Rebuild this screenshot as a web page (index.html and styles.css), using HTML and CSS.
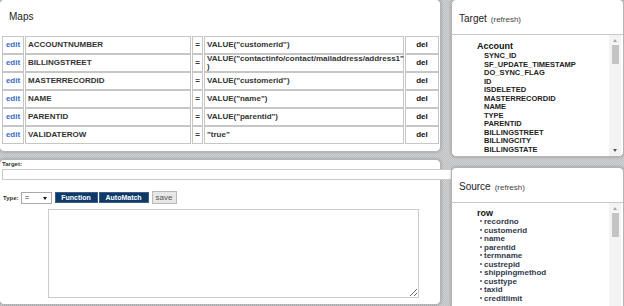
FILE: index.html
```html
<!DOCTYPE html>
<html>
<head>
<meta charset="utf-8">
<title>Maps</title>
<link rel="stylesheet" href="styles.css">
</head>
<body>
<div class="layout">
  <div class="col-left">
    <section class="panel maps">
      <h2 class="panel-title">Maps</h2>
      <table class="map-table">
        <tr>
          <td class="c-edit"><a class="edit">edit</a></td>
          <td class="c-field">ACCOUNTNUMBER</td>
          <td class="c-eq">=</td>
          <td class="c-val">VALUE("customerid")</td>
          <td class="c-del">del</td>
        </tr>
        <tr>
          <td class="c-edit"><a class="edit">edit</a></td>
          <td class="c-field">BILLINGSTREET</td>
          <td class="c-eq">=</td>
          <td class="c-val">VALUE("contactinfo/contact/mailaddress/address1"<br>)</td>
          <td class="c-del">del</td>
        </tr>
        <tr>
          <td class="c-edit"><a class="edit">edit</a></td>
          <td class="c-field">MASTERRECORDID</td>
          <td class="c-eq">=</td>
          <td class="c-val">VALUE("customerid")</td>
          <td class="c-del">del</td>
        </tr>
        <tr>
          <td class="c-edit"><a class="edit">edit</a></td>
          <td class="c-field">NAME</td>
          <td class="c-eq">=</td>
          <td class="c-val">VALUE("name")</td>
          <td class="c-del">del</td>
        </tr>
        <tr>
          <td class="c-edit"><a class="edit">edit</a></td>
          <td class="c-field">PARENTID</td>
          <td class="c-eq">=</td>
          <td class="c-val">VALUE("parentid")</td>
          <td class="c-del">del</td>
        </tr>
        <tr>
          <td class="c-edit"><a class="edit">edit</a></td>
          <td class="c-field">VALIDATEROW</td>
          <td class="c-eq">=</td>
          <td class="c-val">"true"</td>
          <td class="c-del">del</td>
        </tr>
      </table>
    </section>
    <section class="panel editor">
      <label class="lbl lbl-block">Target:</label>
      <input class="target-input" type="text">
      <div class="type-row">
        <span class="lbl">Type:</span>
        <span class="select-wrap">
          <select class="type-select"><option>=</option></select>
          <span class="select-arrow"></span>
        </span>
        <button class="btn-dark btn-fn">Function</button>
        <button class="btn-dark btn-am">AutoMatch</button>
        <button class="btn-save">save</button>
      </div>
      <textarea class="expr"></textarea>
    </section>
  </div>
  <div class="col-right">
    <section class="panel side target">
      <header class="side-head"><span class="side-title">Target</span><span class="refresh">(refresh)</span></header>
      <div class="side-body">
        <div class="tree tree-target">
          <div class="tree-root">Account</div>
          <ul class="tree-items">
            <li>SYNC_ID</li>
            <li>SF_UPDATE_TIMESTAMP</li>
            <li>DO_SYNC_FLAG</li>
            <li>ID</li>
            <li>ISDELETED</li>
            <li>MASTERRECORDID</li>
            <li>NAME</li>
            <li>TYPE</li>
            <li>PARENTID</li>
            <li>BILLINGSTREET</li>
            <li>BILLINGCITY</li>
            <li>BILLINGSTATE</li>
          </ul>
        </div>
        <div class="scrollbar">
          <span class="sb-arrow sb-up"><span class="tri-up"></span></span>
          <span class="sb-thumb sb-thumb-target"></span>
          <span class="sb-space"></span>
          <span class="sb-arrow sb-down"><span class="tri-down"></span></span>
        </div>
      </div>
    </section>
    <section class="panel side source">
      <header class="side-head"><span class="side-title">Source</span><span class="refresh">(refresh)</span></header>
      <div class="side-body">
        <div class="tree tree-source">
          <div class="tree-root">row</div>
          <ul class="tree-items bullets">
            <li>recordno</li>
            <li>customerid</li>
            <li>name</li>
            <li>parentid</li>
            <li>termname</li>
            <li>custrepid</li>
            <li>shippingmethod</li>
            <li>custtype</li>
            <li>taxid</li>
            <li>creditlimit</li>
          </ul>
        </div>
        <div class="scrollbar">
          <span class="sb-arrow sb-up"><span class="tri-up"></span></span>
          <span class="sb-thumb sb-thumb-source"></span>
          <span class="sb-space"></span>
        </div>
      </div>
    </section>
  </div>
</div>
</body>
</html>
```

FILE: styles.css
```css
html, body {
  margin: 0;
  padding: 0;
}
body {
  width: 624px;
  height: 306px;
  overflow: hidden;
  font-family: "Liberation Sans", Arial, sans-serif;
  color: #222;
  background-color: #c6c8c9;
  background-image: repeating-conic-gradient(#bdbfc0 0 25%, #d0d2d3 0 50%);
  background-size: 2px 2px;
}

.layout {
  display: flex;
  gap: 10px;
  margin: -1px 0 0 -1px;
}
.col-left {
  flex: none;
  width: 442px;
  display: flex;
  flex-direction: column;
  gap: 7px;
}
.col-right {
  flex: none;
  width: 173px;
  display: flex;
  flex-direction: column;
  gap: 10px;
}

.panel {
  box-sizing: border-box;
  background: #fff;
  border: 1px solid #b3b5b7;
  border-radius: 5px;
  box-shadow: 0 0 3px rgba(0, 0, 0, 0.28);
}
.maps { height: 153px; }
.editor { height: 146px; padding-left: 2px; }
.target { height: 158px; }
.source { height: 150px; }

/* Maps */
.panel-title {
  margin: 0 0 13px;
  padding: 11px 0 0 9px;
  font-size: 10px;
  line-height: 12px;
  font-weight: normal;
  color: #222;
}
.map-table {
  margin-left: 1px;
  width: 439px;
  table-layout: fixed;
  border-collapse: separate;
  border-spacing: 1px 0;
}
.map-table tr { height: 18px; }
.map-table td {
  box-sizing: border-box;
  border: 1px solid #c6c6c6;
  padding: 0 2px;
  font-size: 8px;
  line-height: 8px;
  font-weight: bold;
  color: #333;
  vertical-align: middle;
  white-space: nowrap;
}
.c-edit { width: 22px; text-align: center; }
.c-field { width: 166px; }
.c-eq { width: 11px; text-align: center; }
.c-val { width: 200px; }
.c-del { width: 34px; text-align: center; color: #111 !important; }
.edit { color: #3a6cc6; }

/* Editor */
.lbl {
  font-size: 6px;
  font-weight: bold;
  color: #333;
}
.lbl-block {
  display: block;
  line-height: 8px;
  margin-top: 0;
}
.target-input {
  display: block;
  box-sizing: border-box;
  width: 451px;
  height: 11px;
  margin: 1px 0 0;
  padding: 0;
  border: 1px solid #cacaca;
  background: #fff;
}
.type-row {
  display: flex;
  align-items: center;
  height: 13px;
  margin-top: 11px;
  padding-left: 1px;
}
.select-wrap {
  position: relative;
  display: inline-flex;
  margin-left: 2px;
}
.type-select {
  appearance: none;
  -webkit-appearance: none;
  box-sizing: border-box;
  width: 31px;
  height: 12px;
  margin: 0;
  padding: 0 0 0 3px;
  border: 1px solid #a9a9a9;
  border-radius: 0;
  background: #fff;
  font-family: "Liberation Sans", Arial, sans-serif;
  font-size: 8px;
  line-height: 10px;
  color: #333;
}
.select-arrow {
  position: absolute;
  right: 5px;
  top: 5px;
  width: 0;
  height: 0;
  border-left: 2px solid transparent;
  border-right: 2px solid transparent;
  border-top: 3px solid #111;
}
.btn-dark {
  box-sizing: border-box;
  height: 11px;
  margin: 0;
  padding: 0;
  border: 1px solid #3b5d86;
  background: #0e3a6a;
  color: #fff;
  font-family: "Liberation Sans", Arial, sans-serif;
  font-size: 7px;
  font-weight: bold;
  line-height: 9px;
}
.btn-fn { width: 43px; margin-left: 3px; }
.btn-am { width: 50px; margin-left: 1px; }
.btn-save {
  box-sizing: border-box;
  width: 25px;
  height: 13px;
  margin: 0 0 0 3px;
  padding: 0;
  border: 1px solid #b9b9b9;
  background: #e7e7e7;
  color: #555;
  font-family: "Liberation Sans", Arial, sans-serif;
  font-size: 8px;
  line-height: 11px;
}
.expr {
  display: block;
  box-sizing: border-box;
  width: 371px;
  height: 89px;
  margin: 5px 0 0 46px;
  padding: 0;
  border: 1px solid #cbcbcb;
  resize: both;
  background: #fff;
}

/* Side panels */
.side {
  display: flex;
  flex-direction: column;
  overflow: hidden;
}
.side-head {
  flex: none;
  box-sizing: border-box;
  height: 35px;
  padding: 11px 0 0 7px;
  border-bottom: 1px solid #c9c9c9;
  line-height: 12px;
}
.side-title {
  font-size: 10px;
  color: #222;
}
.refresh {
  margin-left: 4px;
  font-size: 8px;
  color: #444;
}
.side-body {
  flex: 1;
  min-height: 0;
  display: flex;
  overflow: hidden;
}
.tree {
  flex: 1;
  min-width: 0;
  overflow: hidden;
  padding-left: 25px;
}
.tree-target { padding-top: 6px; }
.tree-source { padding-top: 5px; }
.tree-root {
  font-size: 9px;
  line-height: 10px;
  font-weight: bold;
  color: #111;
}
.tree-items {
  list-style: none;
  margin: 1px 0 0 7px;
  padding: 0;
  font-size: 7.5px;
  line-height: 8.5px;
  font-weight: bold;
  color: #222;
  white-space: nowrap;
}
.tree-items.bullets {
  margin: 0 0 0 3px;
  font-size: 8px;
  color: #2f3a4e;
}
.bullets li::before {
  content: "";
  display: inline-block;
  width: 2px;
  height: 2px;
  margin: 0 2px 1px 0;
  border-radius: 50%;
  background: #555;
  vertical-align: middle;
}

.scrollbar {
  flex: none;
  width: 12px;
  margin-right: 2px;
  display: flex;
  flex-direction: column;
  align-items: center;
  background: #f3f3f3;
}
.sb-arrow {
  flex: none;
  height: 10px;
  display: flex;
  align-items: center;
  justify-content: center;
}
.sb-down { margin-bottom: 1px; }
.tri-up, .tri-down {
  width: 0;
  height: 0;
  border-left: 2px solid transparent;
  border-right: 2px solid transparent;
}
.tri-up { border-bottom: 3px solid #a5a5a5; }
.tri-down { border-top: 3px solid #555; }
.sb-thumb {
  flex: none;
  width: 7px;
  background: #c4c4c4;
}
.sb-thumb-target { height: 19px; }
.sb-thumb-source { height: 24px; }
.sb-space { flex: 1; }
```
